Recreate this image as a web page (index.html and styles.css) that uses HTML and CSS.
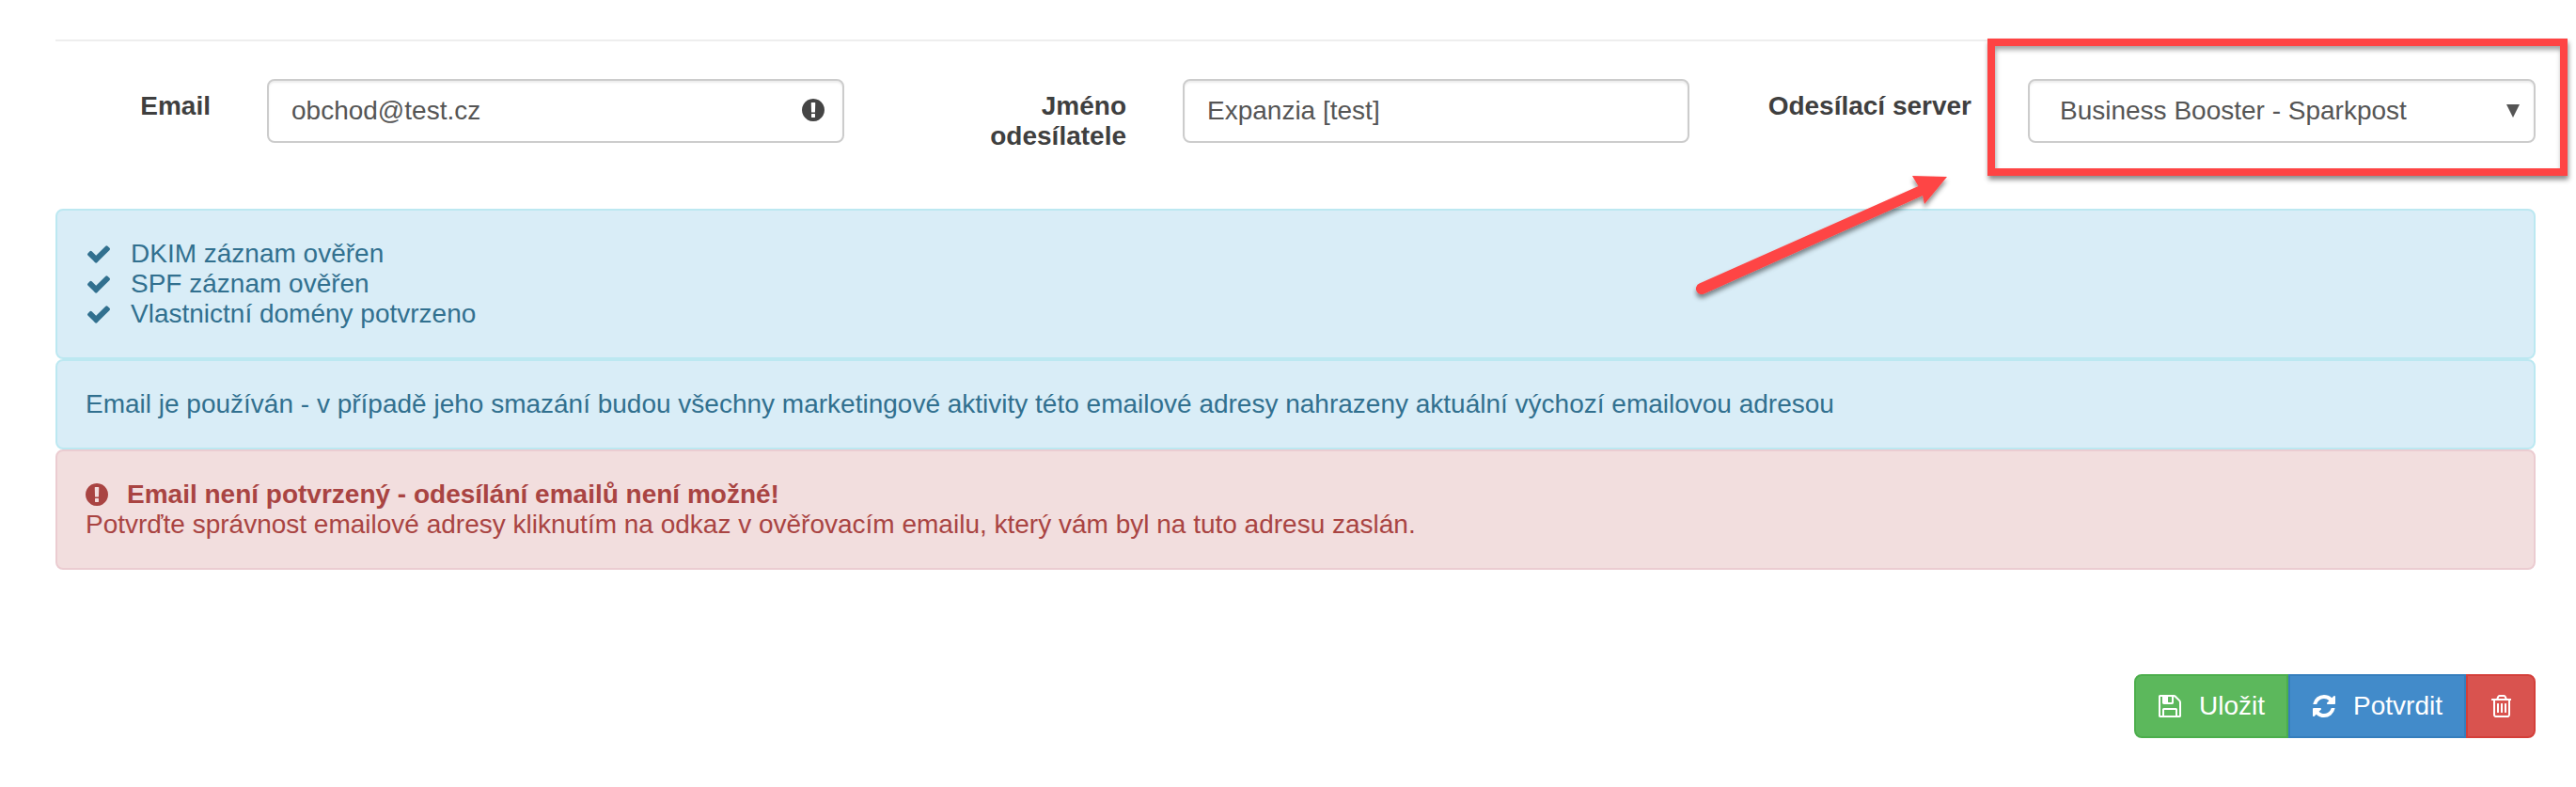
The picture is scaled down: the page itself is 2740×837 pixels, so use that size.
FILE: index.html
```html
<!DOCTYPE html>
<html lang="cs">
<head>
<meta charset="utf-8">
<title>Email</title>
<link rel="stylesheet" href="styles.css">
</head>
<body>
<main class="page">
  <hr class="rule">
  <form class="fields">
    <label class="label" for="email">Email</label>
    <div class="field">
      <input class="control" id="email" type="text" value="obchod@test.cz">
      <svg class="field-icon" viewBox="128 128 1536 1536"><path d="M896 128q209 0 385.500 103t279.500 279.500 103 385.500-103 385.500-279.500 279.500-385.500 103-385.500-103-279.500-279.500-103-385.500 103-385.500 279.500-279.500 385.500-103zm128 1247v-190q0-14-9-23.500t-22-9.500h-192q-13 0-23 10t-10 23v190q0 13 10 23t23 10h192q13 0 22-9.500t9-23.500zm-2-344l18-621q0-12-10-18-10-8-24-8h-220q-14 0-24 8-10 6-10 18l17 621q0 10 10 17.500t24 7.500h185q14 0 23.500-7.500t10.500-17.500z"/></svg>
    </div>
    <label class="label" for="sender">Jméno<br>odesílatele</label>
    <div class="field">
      <input class="control" id="sender" type="text" value="Expanzia [test]">
    </div>
    <label class="label" for="server">Odesílací server</label>
    <div class="field">
      <select class="control control-select" id="server">
        <option>Business Booster - Sparkpost</option>
      </select>
      <span class="select-arrow"></span>
    </div>
  </form>

  <section class="alert alert-info">
    <div class="check-line"><svg class="check" viewBox="121 256 1550 1350"><path d="M1671 566q0 40-28 68l-724 724-136 136q-28 28-68 28t-68-28l-136-136-362-362q-28-28-28-68t28-68l136-136q28-28 68-28t68 28l294 295 656-657q28-28 68-28t68 28l136 136q28 28 28 68z"/></svg>DKIM záznam ověřen</div>
    <div class="check-line"><svg class="check" viewBox="121 256 1550 1350"><path d="M1671 566q0 40-28 68l-724 724-136 136q-28 28-68 28t-68-28l-136-136-362-362q-28-28-28-68t28-68l136-136q28-28 68-28t68 28l294 295 656-657q28-28 68-28t68 28l136 136q28 28 28 68z"/></svg>SPF záznam ověřen</div>
    <div class="check-line"><svg class="check" viewBox="121 256 1550 1350"><path d="M1671 566q0 40-28 68l-724 724-136 136q-28 28-68 28t-68-28l-136-136-362-362q-28-28-28-68t28-68l136-136q28-28 68-28t68 28l294 295 656-657q28-28 68-28t68 28l136 136q28 28 28 68z"/></svg>Vlastnictní domény potvrzeno</div>
  </section>
  <section class="alert alert-info">Email je používán - v případě jeho smazání budou všechny marketingové aktivity této emailové adresy nahrazeny aktuální výchozí emailovou adresou</section>
  <section class="alert alert-danger">
    <div class="danger-title"><svg class="danger-icon" viewBox="128 128 1536 1536"><path d="M896 128q209 0 385.500 103t279.500 279.500 103 385.500-103 385.500-279.500 279.500-385.500 103-385.500-103-279.500-279.500-103-385.500 103-385.500 279.500-279.500 385.500-103zm128 1247v-190q0-14-9-23.500t-22-9.500h-192q-13 0-23 10t-10 23v190q0 13 10 23t23 10h192q13 0 22-9.500t9-23.500zm-2-344l18-621q0-12-10-18-10-8-24-8h-220q-14 0-24 8-10 6-10 18l17 621q0 10 10 17.500t24 7.500h185q14 0 23.500-7.500t10.500-17.500z"/></svg>Email není potvrzený - odesílání emailů není možné!</div>
    <div>Potvrďte správnost emailové adresy kliknutím na odkaz v ověřovacím emailu, který vám byl na tuto adresu zaslán.</div>
  </section>

  <div class="actions">
    <button class="btn btn-save" type="button"><svg class="btn-icon" viewBox="128 128 1536 1536"><path d="M512 1536h768v-384h-768v384zm896 0h128v-896q0-14-10-38.500t-20-34.500l-281-281q-10-10-34-20t-39-10v416q0 40-28 68t-68 28h-576q-40 0-68-28t-28-68v-416h-128v1280h128v-416q0-40 28-68t68-28h832q40 0 68 28t28 68v416zm-384-928v-320q0-13-9.500-22.500t-22.500-9.500h-192q-13 0-22.500 9.500t-9.500 22.500v320q0 13 9.500 22.500t22.500 9.500h192q13 0 22.500-9.500t9.500-22.500zm640 32v928q0 40-28 68t-68 28h-1344q-40 0-68-28t-28-68v-1344q0-40 28-68t68-28h928q40 0 88 20t76 48l280 280q28 28 48 76t20 88z"/></svg>Uložit</button>
    <button class="btn btn-confirm" type="button"><svg class="btn-icon" viewBox="128 128 1536 1536"><path d="M1639 1056q0 5-1 7-64 268-268 434.500t-478 166.500q-146 0-282.500-55t-243.500-157l-129 129q-19 19-45 19t-45-19-19-45v-448q0-26 19-45t45-19h448q26 0 45 19t19 45-19 45l-137 137q71 66 161 102t187 36q134 0 250-65t186-179q11-17 53-117 8-23 30-23h192q13 0 22.500 9.500t9.500 22.500zm25-800v448q0 26-19 45t-45 19h-448q-26 0-45-19t-19-45 19-45l138-138q-148-137-349-137-134 0-250 65t-186 179q-11 17-53 117-8 23-30 23h-199q-13 0-22.500-9.500t-9.500-22.500v-7q65-268 270-434.500t480-166.500q146 0 284 55.500t245 156.500l130-129q19-19 45-19t45 19 19 45z"/></svg>Potvrdit</button>
    <button class="btn btn-delete" type="button" aria-label="Smazat"><svg class="btn-icon btn-icon-trash" viewBox="128 128 1408 1536"><path d="M704 736v576q0 14-9 23t-23 9h-64q-14 0-23-9t-9-23v-576q0-14 9-23t23-9h64q14 0 23 9t9 23zm256 0v576q0 14-9 23t-23 9h-64q-14 0-23-9t-9-23v-576q0-14 9-23t23-9h64q14 0 23 9t9 23zm256 0v576q0 14-9 23t-23 9h-64q-14 0-23-9t-9-23v-576q0-14 9-23t23-9h64q14 0 23 9t9 23zm128 724v-948h-896v948q0 22 7 40.500t14.500 27 10.500 8.500h832q3 0 10.500-8.500t14.500-27 7-40.500zm-672-1076h448l-48-117q-7-9-17-11h-317q-10 2-17 11zm928 32v64q0 14-9 23t-23 9h-96v948q0 83-47 143.500t-113 60.500h-832q-66 0-113-58.500t-47-141.500v-952h-96q-14 0-23-9t-9-23v-64q0-14 9-23t23-9h309l70-167q15-37 54-63t79-26h320q40 0 79 26t54 63l70 167h309q14 0 23 9t9 23z"/></svg></button>
  </div>

  <div class="callout-box"></div>
  <svg class="callout-arrow" viewBox="0 0 280 145">
    <defs>
      <filter id="soft" x="-20%" y="-20%" width="140%" height="140%">
        <feDropShadow dx="0" dy="4" stdDeviation="2.5" flood-color="#000" flood-opacity="0.45"/>
      </filter>
    </defs>
    <path class="arrow-shape" filter="url(#soft)" d="M271 8 L234 7 L240.500 18 L7.500 121.500 A6 6 0 0 0 12.500 132.500 L245 28 L247 37 Z"/>
  </svg>
</main>
</body>
</html>
```
FILE: styles.css
```css
* { box-sizing: border-box; }

html, body {
  margin: 0;
  background: #fff;
}

body {
  font-family: "Liberation Sans", Arial, sans-serif;
  font-size: 28px;
  line-height: 32px;
  color: #333;
}

.page {
  position: relative;
  height: 837px;
  padding: 42px 43px 0 59px;
  overflow: hidden;
}

.rule {
  height: 2px;
  margin: 0;
  border: 0;
  background: #eee;
}

.fields {
  display: grid;
  grid-template-columns: 165px 614px 240px 539px 240px 540px;
  column-gap: 60px;
  height: 178px;
  padding-top: 40px;
}

.label {
  padding-top: 13px;
  font-weight: 700;
  text-align: right;
  color: #3f3f3f;
}

.field {
  position: relative;
  height: 68px;
}

.control {
  display: block;
  width: 100%;
  height: 68px;
  padding: 0 24px;
  font: inherit;
  color: #555;
  background: #fff;
  border: 2px solid #ccc;
  border-radius: 8px;
  box-shadow: inset 0 2px 2px rgba(0, 0, 0, .075);
  outline: none;
}

.control-select {
  padding-left: 32px;
  appearance: none;
  -webkit-appearance: none;
}

.field-icon {
  position: absolute;
  top: 21px;
  right: 21px;
  width: 24px;
  height: 24px;
  fill: #444;
}

.select-arrow {
  position: absolute;
  top: 27px;
  right: 17px;
  width: 0;
  height: 0;
  border-left: 7px solid transparent;
  border-right: 7px solid transparent;
  border-top: 14px solid #555;
}

.alert {
  padding: 30px;
  border: 2px solid transparent;
  border-radius: 8px;
}

.alert-info {
  color: #31708f;
  background: #d9edf7;
  border-color: #bce8f1;
}

.alert-danger {
  color: #a94442;
  background: #f2dede;
  border-color: #ebccd1;
}

.check-line {
  display: flex;
  align-items: center;
}

.check {
  flex: none;
  width: 24px;
  height: 21px;
  margin: 0 22px 0 2px;
  fill: #31708f;
}

.danger-title {
  display: flex;
  align-items: center;
  font-weight: 700;
}

.danger-icon {
  flex: none;
  width: 24px;
  height: 24px;
  margin-right: 20px;
  fill: #a94442;
}

.actions {
  display: flex;
  justify-content: flex-end;
  margin-top: 111px;
}

.btn {
  display: flex;
  align-items: center;
  height: 68px;
  padding: 0 23px 0 24px;
  font: inherit;
  color: #fff;
  border: 2px solid transparent;
}

.btn-save {
  background: #5cb85c;
  border-color: #4cae4c;
  border-radius: 8px 0 0 8px;
}

.btn-confirm {
  background: #428bca;
  border-color: #357ebd;
}

.btn-delete {
  padding: 0 24px;
  background: #d9534f;
  border-color: #d43f3a;
  border-radius: 0 8px 8px 0;
}

.btn-icon {
  flex: none;
  width: 24px;
  height: 24px;
  margin-right: 19px;
  fill: #fff;
}

.btn-icon-trash {
  width: 22px;
  margin-right: 0;
}

.callout-box {
  position: absolute;
  left: 2114px;
  top: 41px;
  width: 617px;
  height: 146px;
  border: 8px solid #fe4444;
  box-shadow: 1px 4px 5px rgba(0, 0, 0, .45), inset 1px 4px 5px rgba(0, 0, 0, .35);
}

.callout-arrow {
  position: absolute;
  left: 1800px;
  top: 180px;
  width: 280px;
  height: 145px;
}

.arrow-shape {
  fill: #fe4444;
}
```
